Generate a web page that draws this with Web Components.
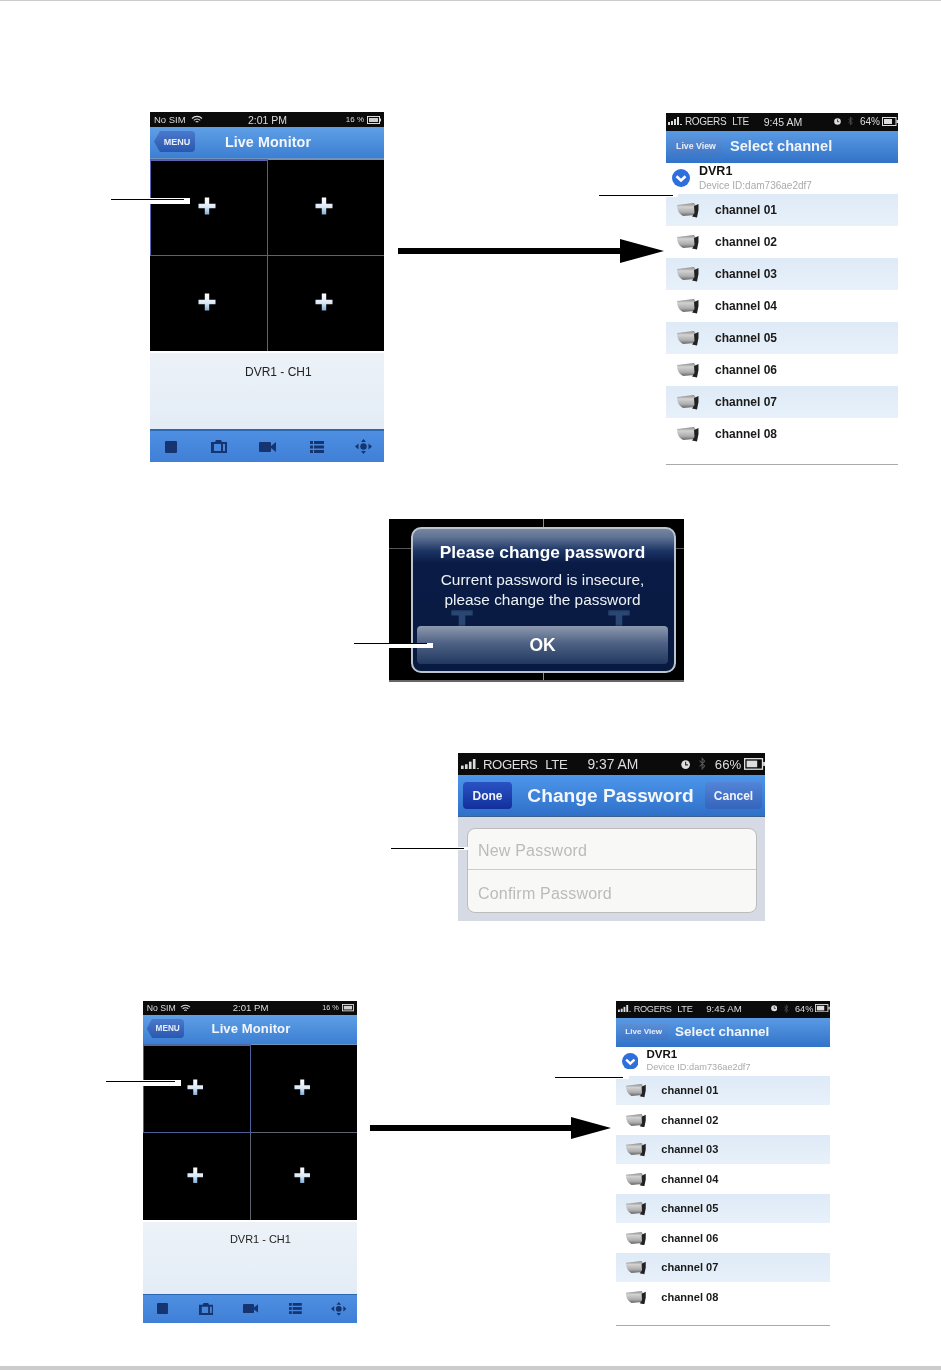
<!DOCTYPE html>
<html>
<head>
<meta charset="utf-8">
<title>Live Monitor</title>
<style>
  html, body { margin: 0; background: #fff; }
  body { font-family: "Liberation Sans", Arial, sans-serif; }
</style>
</head>
<body>

<manual-page>
  <figure-row style="margin-top:111px;padding-left:150px">
    <live-monitor></live-monitor>
    <flow-arrow style="--w:266px;--head:44px;--hh:25px;--bar:6px;margin:126px 2px 0 14px"></flow-arrow>
    <channel-list style="margin-top:1px"></channel-list>
  </figure-row>

  <figure-row style="margin-top:54px;padding-left:389px">
    <password-alert></password-alert>
  </figure-row>

  <figure-row style="margin-top:71px;padding-left:458px">
    <change-password></change-password>
  </figure-row>

  <figure-row style="margin-top:80px;padding-left:143px">
    <live-monitor style="--z:.915;--mh:352px;--pt:13px"></live-monitor>
    <flow-arrow style="--w:241px;--head:40px;--hh:23px;--bar:6px;margin:115px 5px 0 13px"></flow-arrow>
    <channel-list style="--z:.922"></channel-list>
  </figure-row>

  <leader-line x1="111" x2="184" y="199" mask="150,190,198,6"></leader-line>
  <leader-line x1="599" x2="673" y="195" mask="666,678,194,3"></leader-line>
  <leader-line x1="354" x2="427" y="643" mask="389,433,643,5"></leader-line>
  <leader-line x1="391" x2="464" y="848" mask="458,468,847,3"></leader-line>
  <leader-line x1="106" x2="175" y="1081" mask="143,181,1080,6"></leader-line>
  <leader-line x1="555" x2="623" y="1077" mask="616,629,1076,3"></leader-line>
</manual-page>

<script>
const tpl = html => {
  const t = document.createElement('template');
  t.innerHTML = html;
  return t;
};

class ShotElement extends HTMLElement {
  constructor() {
    super();
    const root = this.attachShadow({ mode: 'open' });
    root.appendChild(this.constructor.template.content.cloneNode(true));
  }
}

// shared bits of svg
const BATTERY = `<svg width="16" height="9" viewBox="0 0 16 9"><rect x=".5" y=".5" width="13.5" height="8" fill="none" stroke="#ddd"/><rect x="2" y="2" width="8" height="5" fill="#ddd"/><rect x="14.5" y="3" width="1.5" height="3" fill="#ddd"/></svg>`;
const SIGNAL = `<svg width="14" height="8" viewBox="0 0 14 8" fill="#ddd"><rect x="0" y="5" width="2" height="3"/><rect x="3" y="4" width="2" height="4"/><rect x="6" y="2" width="2" height="6"/><rect x="9" y="0" width="2" height="8"/><rect x="12" y="7" width="2" height="1"/></svg>`;
const ALARM = `<svg width="7" height="7" viewBox="0 0 7 7"><circle cx="3.5" cy="3.5" r="3.3" fill="#ddd"/><path d="M3.5 1.4V3.7H5.2" fill="none" stroke="#222" stroke-width=".8"/></svg>`;
const BLUETOOTH = `<svg width="5" height="10" viewBox="0 0 5 10"><path d="M.4 2.8 4.3 6.8 2.4 9V1L4.3 3.2 .4 7.2" fill="none" stroke="#555" stroke-width=".8"/></svg>`;

class ManualPage extends ShotElement {
  static template = tpl(`<style>
    :host { display: flex; flex-direction: column; position: relative; height: 1370px; box-sizing: border-box;
      border-top: 1px solid #ccc; overflow: hidden; }
    .foot { position: absolute; left: 0; right: 0; bottom: 0; height: 4px; background: #ccc; }
  </style><slot></slot><div class="foot"></div>`);
}

class FigureRow extends ShotElement {
  static template = tpl(`<style>:host { display: flex; align-items: flex-start; }</style><slot></slot>`);
}

class LeaderLine extends ShotElement {
  static template = tpl(`<style>
    :host { display: contents; }
    div { position: absolute; }
    .mask { background: #fff; }
    .line { background: #000; height: 1.2px; }
  </style><div class="mask"></div><div class="line"></div>`);
  connectedCallback() {
    const num = n => this.getAttribute(n);
    // page has a 1px top border, the absolute children sit inside it
    const line = this.shadowRoot.querySelector('.line');
    line.style.cssText = `left:${num('x1')}px;width:${num('x2') - num('x1')}px;top:${num('y') - 1}px`;
    const [from, to, top, h] = num('mask').split(',').map(Number);
    const mask = this.shadowRoot.querySelector('.mask');
    mask.style.cssText = `left:${from}px;width:${to - from}px;top:${top - 1}px;height:${h}px`;
  }
}

class FlowArrow extends ShotElement {
  static template = tpl(`<style>
    :host { display: flex; align-items: center; flex: none; width: var(--w); height: var(--hh); }
    .bar { flex: 1; height: var(--bar); background: #000; }
    .head { width: 0; height: 0; border-left: var(--head) solid #000;
      border-top: calc(var(--hh) / 2) solid transparent; border-bottom: calc(var(--hh) / 2) solid transparent; }
  </style><div class="bar"></div><div class="head"></div>`);
}

class AddPlus extends ShotElement {
  static template = tpl(`<style>:host { display: block; line-height: 0; }</style>
    <svg width="18" height="18" viewBox="0 0 18 18">
      <defs><linearGradient id="g" x1="0" y1="0" x2="0" y2="1"><stop offset="0" stop-color="#fff"/><stop offset=".55" stop-color="#dce9f5"/><stop offset="1" stop-color="#7fb0dc"/></linearGradient></defs>
      <path d="M6.8 .5H11.2V6.8H17.5V11.2H11.2V17.5H6.8V11.2H.5V6.8H6.8Z" fill="url(#g)"/>
    </svg>`);
}

class MonitorCell extends ShotElement {
  static template = tpl(`<style>
    :host { display: flex; align-items: center; justify-content: center; background: #000; padding: 0 3px 3px 0; }
    :host([selected]) { box-shadow: 0 0 0 1px #4c62a0, inset 1px 1px 0 #5c62b4; position: relative; }
  </style><add-plus></add-plus>`);
}

class ToolIcon extends ShotElement {
  static icons = {
    stop: `<svg width="12" height="12" viewBox="0 0 12 12"><rect width="12" height="12" rx="1"/></svg>`,
    photo: `<svg width="16" height="13" viewBox="0 0 16 13"><path fill-rule="evenodd" d="M0 2H4L5 0H10L11 2H16V13H0ZM3 4V11H10V4ZM12 4V11H14V4Z"/></svg>`,
    video: `<svg width="17" height="12" viewBox="0 0 17 12"><rect y="1" width="12" height="10" rx="1"/><path d="M12 5 17 1V11L12 7Z"/></svg>`,
    list: `<svg width="14" height="12" viewBox="0 0 14 12"><rect width="3" height="3"/><rect x="4" width="10" height="3"/><rect y="4.5" width="3" height="3"/><rect x="4" y="4.5" width="10" height="3"/><rect y="9" width="3" height="3"/><rect x="4" y="9" width="10" height="3"/></svg>`,
    ptz: `<svg width="17" height="15" viewBox="0 0 17 15"><path d="M8.5 0 11 3H6ZM8.5 15 6 12H11ZM0 7.5 3.5 4.5V10.5ZM17 7.5 13.5 4.5V10.5Z"/><circle cx="8.5" cy="7.5" r="3.2"/></svg>`
  };
  static template = tpl(`<style>:host { display: block; line-height: 0; fill: #16346f; }</style><span></span>`);
  connectedCallback() {
    this.shadowRoot.querySelector('span').innerHTML = ToolIcon.icons[this.getAttribute('name')];
  }
}

class LiveMonitor extends ShotElement {
  static template = tpl(`<style>
    :host { display: flex; flex-direction: column; flex: none; zoom: var(--z, 1); width: 234px; height: var(--mh, 350px);
      filter: blur(.5px); overflow: hidden; }
    .status { height: 15px; background: #0b0b0b; color: #ddd; font-size: 9.5px; display: grid; grid-template-columns: 1fr auto 1fr; align-items: center; padding: 0 3px 0 4px; }
    .status .l { display: flex; align-items: center; gap: 5px; }
    .status .r { display: flex; align-items: center; justify-content: flex-end; gap: 3px; font-size: 8px; }
    .status .t { font-size: 10.5px; }
    .nav { background: linear-gradient(#5f9fe6, #3c7fd2); border-bottom: 2px solid #6f93bd; display: grid; grid-template-columns: 1fr auto 1fr; align-items: center; padding: 0 2px 2px 4px; box-sizing: border-box; height: 33px; }
    .title { color: #f2f6fb; font-size: 14.3px; font-weight: bold; letter-spacing: .1px; }
    .menu { justify-self: start; width: 41px; height: 21px; box-sizing: border-box; padding-left: 5px; background: linear-gradient(#4a79cc, #2a57b0);
      clip-path: polygon(6px 0, 100% 0, 100% 100%, 6px 100%, 0 50%); border-radius: 4px;
      color: #e8eef8; font-size: 9px; font-weight: bold; display: flex; align-items: center; justify-content: center; }
    .grid { display: grid; grid-template-columns: 1fr 1fr; grid-template-rows: 95px 95px; gap: 1px; background: #5c6470; flex: none; }
    .panel { flex: 1; margin-top: 1px; background: linear-gradient(#edf2f8, #e3ecf6); border-top: 1px solid #fff; font-size: 12px; color: #222; padding: var(--pt, 12px) 0 0 95px; border-bottom: 2px solid #2a68b0; }
    .tools { height: 31px; flex: none; background: linear-gradient(#4e8fe2, #3f7fd6); display: flex; align-items: center; padding-left: 15px; }
    tool-icon:nth-child(2) { margin-left: 34px; }
    tool-icon:nth-child(3) { margin-left: 32px; }
    tool-icon:nth-child(4) { margin-left: 34px; }
    tool-icon:nth-child(5) { margin-left: 31px; }
  </style>
  <div class="status">
    <div class="l">No SIM
      <svg width="12" height="9" viewBox="0 0 12 9" fill="none" stroke="#ddd" stroke-width="1.1"><path d="M1 3.5A7 7 0 0 1 11 3.5M2.8 5.4A4.5 4.5 0 0 1 9.2 5.4M4.6 7.2A2 2 0 0 1 7.4 7.2"/></svg>
    </div>
    <div class="t">2:01 PM</div>
    <div class="r">16 % <svg width="14" height="8" viewBox="0 0 14 8"><rect x=".5" y=".5" width="12" height="7" fill="none" stroke="#ddd"/><rect x="2" y="2" width="9" height="4" fill="#ccc"/><rect x="13" y="2.5" width="1" height="3" fill="#ddd"/></svg></div>
  </div>
  <div class="nav">
    <div class="menu">MENU</div>
    <div class="title">Live Monitor</div>
    <div></div>
  </div>
  <div class="grid">
    <monitor-cell selected></monitor-cell><monitor-cell></monitor-cell>
    <monitor-cell></monitor-cell><monitor-cell></monitor-cell>
  </div>
  <div class="panel">DVR1 - CH1</div>
  <div class="tools">
    <tool-icon name="stop"></tool-icon><tool-icon name="photo"></tool-icon><tool-icon name="video"></tool-icon><tool-icon name="list"></tool-icon><tool-icon name="ptz"></tool-icon>
  </div>`);
}

class CarrierStatus extends ShotElement {
  static template = tpl(`<style>
    :host { display: grid; grid-template-columns: 1fr auto 1fr; align-items: center; height: var(--h, 18px); background: #0b0b0b; color: #ddd; font-size: 10px; line-height: 1; zoom: var(--sz, 1); padding: var(--spt, 0) 0 0 2px; box-sizing: border-box; }
    .l { display: flex; align-items: center; gap: 3px; }
    .car { letter-spacing: -.35px; }
    .lte { margin-left: 3px; letter-spacing: -.3px; }
    .t { font-size: 10.5px; }
    .r { display: flex; align-items: center; justify-content: flex-end; gap: 7px; }
    .pct { margin-right: -5px; }
  </style>
  <div class="l"><span class="sig"></span><span class="car">ROGERS</span><span class="lte">LTE</span></div>
  <div class="t"></div>
  <div class="r"><span class="al"></span><span class="bt"></span><span class="pct"></span><span class="bat"></span></div>`);
  connectedCallback() {
    const $ = s => this.shadowRoot.querySelector(s);
    $('.t').textContent = this.getAttribute('time');
    $('.pct').textContent = this.getAttribute('pct');
    $('.sig').innerHTML = SIGNAL;
    $('.al').innerHTML = ALARM;
    $('.bt').innerHTML = BLUETOOTH;
    $('.bat').innerHTML = BATTERY;
  }
}

class ChannelRow extends ShotElement {
  static template = tpl(`<style>
    :host { display: flex; align-items: center; height: 32px; padding-left: 10px; font-size: 12px; font-weight: bold; color: #1a1a1a; background: #fff; }
    :host(:nth-of-type(odd)) { background: linear-gradient(#deeaf7, #e8f1fa); }
    svg { margin-right: 16px; flex: none; }
  </style>
  <svg width="23" height="16" viewBox="0 0 23 16">
    <defs><linearGradient id="c" x1="0" y1="0" x2="0" y2="1"><stop offset="0" stop-color="#858585"/><stop offset=".3" stop-color="#d2d2d2"/><stop offset=".7" stop-color="#aeaeae"/><stop offset="1" stop-color="#666"/></linearGradient></defs>
    <path d="M1 3 18 1 20 4 19 13 7 14Q1 11 1 3Z" fill="url(#c)"/>
    <path d="M18 4 22.5 2V8L21 15.5 16 14.5 18.5 11Z" fill="#222"/>
  </svg><slot></slot>`);
}

class ChannelList extends ShotElement {
  static template = tpl(`<style>
    :host { display: flex; flex-direction: column; flex: none; zoom: var(--z, 1); width: 232px; height: 352px; box-sizing: border-box; background: #fff; border-bottom: 1px solid #aaa; filter: blur(.5px); }
    .nav { height: 32px; box-sizing: border-box; padding: 0 0 2px 4px; background: linear-gradient(#5a9ae4, #3273c8); display: flex; align-items: center; gap: 8px; }
    .back { width: 52px; height: 19px; border-radius: 4px; background: linear-gradient(#5c90d8, #3f77c6); color: #e8eef8; font-size: 8.8px; font-weight: bold; display: flex; align-items: center; justify-content: center; }
    .title { color: #f0f5fb; font-size: 14.6px; font-weight: bold; }
    .dvr { height: 31px; display: flex; align-items: center; padding: 0 0 1px 6px; box-sizing: border-box; gap: 9px; }
    .chev { flex: none; }
    .name { font-size: 12.5px; font-weight: bold; color: #111; line-height: 14px; }
    .id { font-size: 10px; color: #aaa; line-height: 14px; margin-top: 1px; }
  </style>
  <carrier-status time="9:45 AM" pct="64%"></carrier-status>
  <div class="nav"><div class="back">Live View</div><div class="title">Select channel</div></div>
  <div class="dvr">
    <svg class="chev" width="18" height="18" viewBox="0 0 18 18"><circle cx="9" cy="9" r="9" fill="#2f6fdc"/><path d="M4.5 7.2 9 11.4 13.5 7.2" fill="none" stroke="#fff" stroke-width="2.6"/></svg>
    <div><div class="name">DVR1</div><div class="id">Device ID:dam736ae2df7</div></div>
  </div>
  <channel-row>channel 01</channel-row>
  <channel-row>channel 02</channel-row>
  <channel-row>channel 03</channel-row>
  <channel-row>channel 04</channel-row>
  <channel-row>channel 05</channel-row>
  <channel-row>channel 06</channel-row>
  <channel-row>channel 07</channel-row>
  <channel-row>channel 08</channel-row>`);
}

class PasswordAlert extends ShotElement {
  static template = tpl(`<style>
    :host { display: block; flex: none; position: relative; width: 295px; height: 163px; box-sizing: border-box; padding: 8px 8px 9px 22px;
      background:
        linear-gradient(#8a8f98, #8a8f98) 154px 0 / 1px 100% no-repeat,
        linear-gradient(#555, #555) 0 29px / 100% 1px no-repeat,
        #000;
      border-bottom: 2px solid #666; filter: blur(.5px); }
    .box { position: relative; height: 146px; box-sizing: border-box; border: 2px solid #bcc4d0; border-radius: 10px; color: #fff; text-align: center; overflow: hidden; padding: 13px 6px 0 4px;
      background: linear-gradient(#77869e 0, #5f7394 8px, #1c3464 22px, #0a1c46 34px, #081a40 100%); }
    .h { font-size: 17.3px; font-weight: bold; line-height: 20px; }
    .b { font-size: 15.4px; line-height: 20px; margin-top: 8px; color: #eef1f6; }
    .ok { position: absolute; left: 4px; right: 6px; top: 97px; height: 38px; border-radius: 4px;
      background: linear-gradient(#8d99ae, #4f6285 45%, #22395f); display: flex; align-items: center; justify-content: center; font-size: 17.5px; font-weight: bold; }
    .ghost { position: absolute; top: 81px; width: 22px; height: 16px; background: #2a4672; filter: blur(1px); clip-path: polygon(0 0, 100% 0, 100% 35%, 65% 35%, 65% 100%, 35% 100%, 35% 35%, 0 35%); }
  </style>
  <div class="box">
    <div class="h">Please change password</div>
    <div class="b">Current password is insecure,<br>please change the password</div>
    <div class="ghost" style="left:38px"></div>
    <div class="ghost" style="left:195px"></div>
    <div class="ok">OK</div>
  </div>`);
}

class ChangePassword extends ShotElement {
  static template = tpl(`<style>
    :host { display: flex; flex-direction: column; flex: none; width: 307px; height: 168px; background: #d6dae4; filter: blur(.5px); --sz: 1.32; --h: 16.7px; --spt: 1.5px; }
    .nav { height: 42px; box-sizing: border-box; background: linear-gradient(#4d96ec, #2f70c8); border-bottom: 1px solid #3b5f8e; display: grid; grid-template-columns: 1fr auto 1fr; align-items: center; padding: 0 3px 0 5px; }
    .btn { height: 27px; border-radius: 4px; color: #eef3fb; font-size: 12px; font-weight: bold; display: flex; align-items: center; justify-content: center; }
    .done { justify-self: start; width: 49px; background: linear-gradient(#2a52c4, #12309c); }
    .cancel { justify-self: end; width: 57px; background: linear-gradient(#5384d6, #3565bc); }
    .title { color: #f3f7fc; font-size: 19.2px; font-weight: bold; margin-right: 4px; padding-top: 1px; }
    .form { margin: 11px 8px 0 9px; height: 85px; box-sizing: border-box; background: #f8f8f6; border: 1px solid #bcbcbc; border-radius: 8px; color: #bbb; font-size: 16px; letter-spacing: .2px; }
    .f { height: 40px; box-sizing: border-box; padding: 3px 0 0 10px; display: flex; align-items: center; }
    .f + .f { border-top: 1px solid #ccc; height: 43px; padding-top: 5px; }
  </style>
  <carrier-status time="9:37 AM" pct="66%"></carrier-status>
  <div class="nav"><div class="btn done">Done</div><div class="title">Change Password</div><div class="btn cancel">Cancel</div></div>
  <div class="form"><div class="f">New Password</div><div class="f">Confirm Password</div></div>`);
}

customElements.define('manual-page', ManualPage);
customElements.define('figure-row', FigureRow);
customElements.define('leader-line', LeaderLine);
customElements.define('flow-arrow', FlowArrow);
customElements.define('add-plus', AddPlus);
customElements.define('monitor-cell', MonitorCell);
customElements.define('tool-icon', ToolIcon);
customElements.define('live-monitor', LiveMonitor);
customElements.define('carrier-status', CarrierStatus);
customElements.define('channel-row', ChannelRow);
customElements.define('channel-list', ChannelList);
customElements.define('password-alert', PasswordAlert);
customElements.define('change-password', ChangePassword);
</script>
</body>
</html>
